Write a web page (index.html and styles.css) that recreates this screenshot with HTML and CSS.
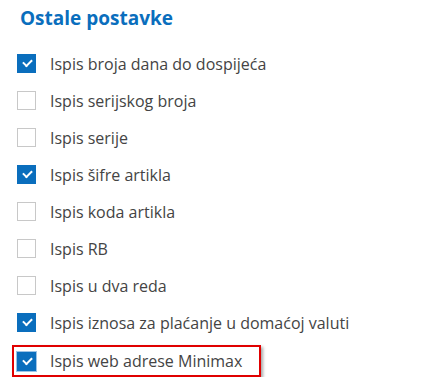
FILE: index.html
```html
<!DOCTYPE html>
<html lang="hr">
<head>
    <meta charset="UTF-8">
    <title>Ostale postavke</title>
    <link rel="stylesheet" href="styles.css">
</head>
<body>
    <div class="panel">
        <h2 class="title">Ostale postavke</h2>
        <ul class="options">
            <li class="option"><span class="box checked"></span>Ispis broja dana do dospijeća</li>
            <li class="option"><span class="box"></span>Ispis serijskog broja</li>
            <li class="option"><span class="box"></span>Ispis serije</li>
            <li class="option"><span class="box checked"></span>Ispis šifre artikla</li>
            <li class="option"><span class="box"></span>Ispis koda artikla</li>
            <li class="option"><span class="box"></span>Ispis RB</li>
            <li class="option"><span class="box"></span>Ispis u dva reda</li>
            <li class="option"><span class="box checked"></span>Ispis iznosa za plaćanje u domaćoj valuti</li>
            <li class="option highlight"><span class="box checked focus"></span>Ispis web adrese Minimax</li>
        </ul>
    </div>
</body>
</html>
```

FILE: styles.css
```css
body {
    margin: 0;
    background: #fff;
    font-family: 'Open Sans', sans-serif;
    color: #444;
}

.panel {
    padding: 5px 0 0 17px;
}

.title {
    margin: 0 0 0 3px;
    font-size: 19px;
    font-weight: 700;
    color: #0a6ebd;
    line-height: 26px;
}

.options {
    list-style: none;
    margin: 14px 0 0;
    padding: 0;
}

.option {
    display: flex;
    align-items: center;
    gap: 14px;
    height: 37px;
    font-size: 16px;
    width: max-content;
}

.box {
    width: 17px;
    height: 17px;
    border: 1px solid #c8c8c8;
    background: #fff;
    position: relative;
    flex: none;
}

.box.checked {
    background: #0a6ebd;
    border-color: #0a6ebd;
}

.box.checked::after {
    content: "";
    position: absolute;
    left: 5px;
    top: 4px;
    width: 7px;
    height: 4px;
    border-left: 2px solid #fff;
    border-bottom: 2px solid #fff;
    transform: rotate(-45deg);
}

.box.focus {
    box-shadow: 0 0 0 1px #9cc3e6;
}

.highlight {
    margin-left: -5px;
    margin-top: 4px;
    padding: 0 17px 0 3px;
    height: 28px;
    border: 2px solid #e00000;
    box-shadow: 2px 2px 3px rgba(0, 0, 0, 0.35);
}
```
